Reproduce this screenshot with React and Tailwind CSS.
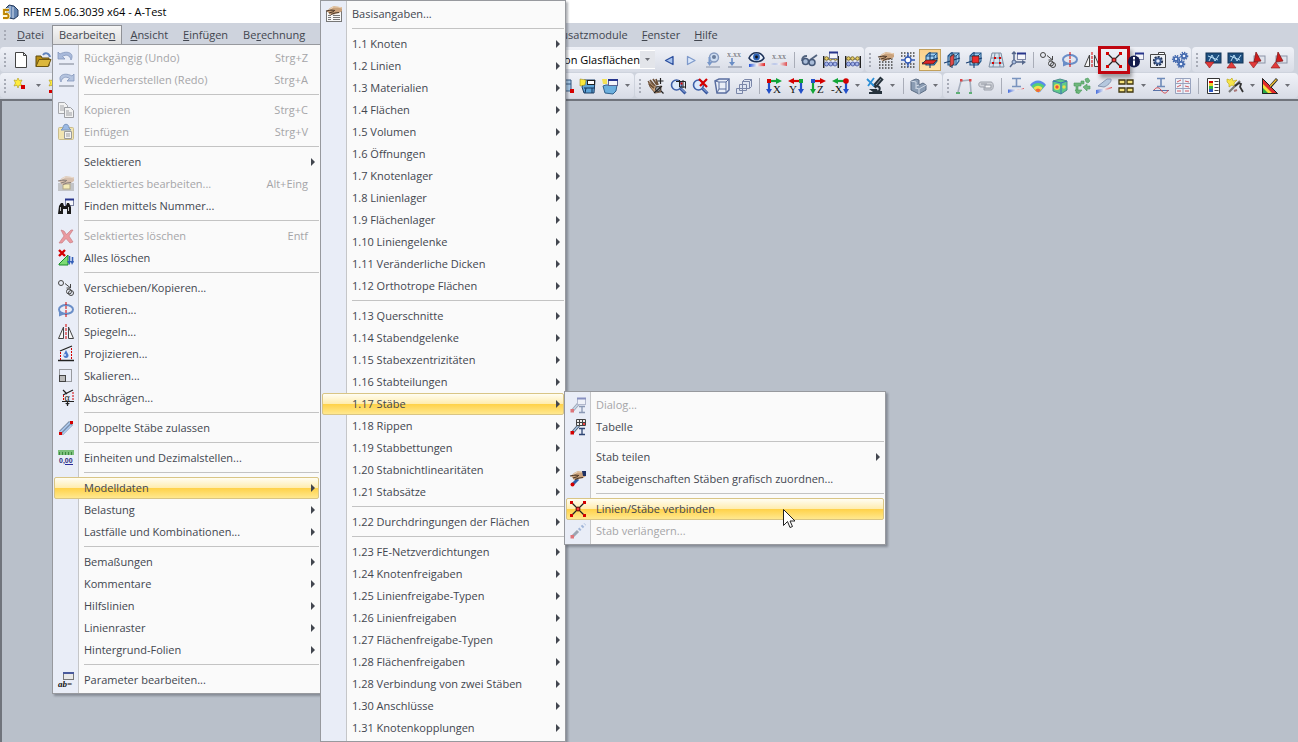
import React from 'react';

const RED = '#d40000';
const BLUE = '#2c4f9e';

const gradientStops = (
    <defs>
        <linearGradient id="heat" x1="0" y1="0" x2="1" y2="0">
            <stop offset="0" stopColor="#1f4fd8" />
            <stop offset="0.5" stopColor="#f4f4f8" />
            <stop offset="1" stopColor="#e02020" />
        </linearGradient>
        <linearGradient id="rainbow" x1="0" y1="0" x2="1" y2="1">
            <stop offset="0" stopColor="#3b6be0" />
            <stop offset="0.35" stopColor="#3fc56a" />
            <stop offset="0.65" stopColor="#f0e04a" />
            <stop offset="1" stopColor="#e8443a" />
        </linearGradient>
    </defs>
);

const dialog = (
    <>
        <rect x="7.5" y="1.5" width="8" height="6" fill="#f4f5fa" stroke="#7d84a4" />
        <path d="M7 1.500h9" stroke="#27358c" strokeWidth="2" />
    </>
);

const member = (
    <>
        <path d="M3 13L9 6" stroke="#51606f" strokeWidth="3" />
        <path d="M3 13L9 6" stroke="#a9c6e6" strokeWidth="1.2" />
        <rect x="0.5" y="12" width="3.5" height="3.5" fill={RED} />
        <path d="M9 9.5h6M9 15.5h6M12 10v6" stroke="#2d4574" strokeWidth="1.3" />
    </>
);

const hand = (
    <>
        <path d="M1 5l3-3 4-2 5 1h3v4l-3 2-3 .5-2 1-2-.5-2 1-1-1.500z" fill="#caa27c" />
        <path d="M3 4l4-3h5l4 1" fill="none" stroke="#ecd3b8" strokeWidth="1.2" />
        <path d="M0 5l5-1 4 .5M3 7l5-1.500M5 8.500l4-1.500 4-.5" fill="none" stroke="#4d3828" strokeWidth="1.1" />
    </>
);

const abacus = (
    <>
        <path d="M.7 4v12M15.3 4v12" stroke="#222" strokeWidth="1.4" />
        <path d="M1 7h14M1 12h14" stroke="#555" />
        <g fill="#e8cf6a" stroke="#6b5a18" strokeWidth="0.8">
            <circle cx="3.500" cy="6.500" r="1.800" />
            <circle cx="7.500" cy="6.500" r="1.800" />
            <circle cx="12.500" cy="6.500" r="1.800" />
        </g>
        <g fill="#a3b4ea" stroke="#3a4a98" strokeWidth="0.8">
            <circle cx="3.500" cy="12" r="2" />
            <circle cx="7.800" cy="12" r="2" />
            <circle cx="12" cy="12" r="2" />
        </g>
    </>
);

const lens = (
    <>
        <circle cx="6.5" cy="7" r="5" fill="#dbe9fb" stroke="#3d5fa8" strokeWidth="1.6" />
        <path d="M10.500 10.500l5 5" stroke="#34549c" strokeWidth="3" />
        <path d="M11 10.500l4 4" stroke="#9fb9ea" />
    </>
);

const planeBase = (
    <>
        <path d="M4 4l3-3h8v8l-3 4H4z" fill="#9fcdf0" stroke="#1f5488" strokeWidth="1.1" />
        <path d="M4 4h8v9M12 4l3-3" stroke="#1f5488" fill="none" />
        <path d="M8 0v16M0 11l16-5" stroke="#173d70" strokeWidth="1.1" />
    </>
);

const star = (
    <path d="M5 0l1.200 2.500L9 2 7.500 5 9 8 6 7.200 5 10 4 7.200 1 8l1.500-3L1 2l2.800.5z" fill="#ffec3d" stroke="#b09c10" strokeWidth="0.6" />
);

const screen = (
    <>
        <rect x="1" y="1" width="15" height="10" fill="#1d4f80" stroke="#123456" />
        <path d="M4 9l3-6 3 6 4-6M3 4l10 4" stroke="#b9ddf5" fill="none" />
    </>
);

const pagePlot = (
    <>
        <rect x="5" y="4" width="11" height="7" fill="#dfe3ec" stroke="#8b94a7" />
        <path d="M5 10l2-10 5 9z" fill="#cf1b1b" stroke="#7a1111" strokeWidth="0.7" />
    </>
);

const ICONS = {
    app: (
        <>
            <path d="M3 5l4-4 5 1 4 4v6l-4 3-5-1z" fill="#6484b0" stroke="#273d5f" />
            <path d="M8 2v11M11 3v11" stroke="#d5e0f0" />
            <path d="M7 6H2v4h3c2 0 2 4 0 4H1" stroke="#fff5c8" strokeWidth="3.4" fill="none" />
            <path d="M7 6H2v4h3c2 0 2 4 0 4H1" stroke="#bd8500" strokeWidth="1.8" fill="none" />
        </>
    ),
    newFile: <path d="M2.500.5h8l3 3v12h-11zM10.500.5v3h3" fill="#fff" stroke="#444" />,
    open: (
        <>
            <path d="M1 14.500V4h5l1 2h7v8z" fill="#b98e12" stroke="#5e4a10" />
            <path d="M1 14.500l3-7h12l-3 7z" fill="#dcb73c" stroke="#6d5510" />
            <path d="M8 3c2-3 6-2 7 2" fill="none" stroke="#5f83bd" strokeWidth="2" />
        </>
    ),
    undo: (
        <>
            <path d="M0 2v7h7L4.500 6.500C8 4 12 5 13 10c4-7-4-10-11-6z" fill="#a9badb" stroke="#8497bb" strokeWidth="0.8" />
            <path d="M1 14h15" stroke="#a2a8b5" strokeWidth="1.6" />
        </>
    ),
    redo: (
        <>
            <path d="M16 2v7H9l2.500-2.500C8 4 4 5 3 10c-4-7 4-10 11-6z" fill="#b5c4df" stroke="#8497bb" strokeWidth="0.8" />
            <path d="M1 14h15" stroke="#a2a8b5" strokeWidth="1.6" />
        </>
    ),
    copy: (
        <>
            <path d="M.5.5h6l3 3v8h-9zM2 4h4M2 6h5M2 8h5" fill="#f2f2f2" stroke="#a4a6ab" />
            <path d="M6.500 5.500h6l3 3v7h-9zM8 9h3M8 11h6M8 13h6" fill="#f2f2f2" stroke="#9b9da2" />
        </>
    ),
    paste: (
        <>
            <rect x="0.500" y="3.500" width="15" height="12" rx="1" fill="#f1e4b0" stroke="#c9bc8d" />
            <path d="M5 4c0-5 6-5 6 0l2 2H3z" fill="#9bb9e4" stroke="#7a96bf" />
            <path d="M6.500 7.500h7v7h-7zM8 10h4M8 12h4" fill="#f3f3f3" stroke="#9b9b9b" />
        </>
    ),
    editSel: (
        <g opacity="0.6">
            <rect x="0" y="7" width="16" height="8" fill="#a9a9a9" />
            <rect x="5" y="8" width="7" height="5" fill="#fbe98e" stroke="#8d7a3a" />
            {hand}
        </g>
    ),
    find: (
        <>
            {dialog}
            <path d="M0 16l1-8 2-3h2l1 3h2l1-3h2l2 4v7H9v-5H5v5z" fill="#1a1a1a" />
            <path d="M2.500 13V9M10.500 13V9" stroke="#ccc" />
        </>
    ),
    deleteSel: <path d="M3 2l3 1 2.500 3.500L13 2h2l-4 6 4 6-3 1-4-4.500L4 15H1l5-7z" fill="#ea9aa0" stroke="#c4757c" strokeWidth="0.6" />,
    deleteAll: (
        <>
            <path d="M1 15V14l9-9v10z" fill="#7ddc74" stroke="#1a8b2b" />
            <path d="M1 0l6 6M7 0L1 6" stroke={RED} strokeWidth="2.4" />
            <path d="M11.500 6v6M14.500 7v6" stroke="#3560b8" strokeWidth="1.6" />
            <path d="M9 11h4l-1.500 4zM12.500 11H16l-2 4z" fill="#3560b8" />
        </>
    ),
    move: (
        <g fill="none" stroke="#444">
            <circle cx="3" cy="3" r="2.500" />
            <path d="M7 3.500l5 4M12.500 4v4h-4" />
            <circle cx="11" cy="11.500" r="2.500" />
            <circle cx="13" cy="13" r="2.500" />
        </g>
    ),
    rotate: (
        <>
            <ellipse cx="8" cy="7.500" rx="7" ry="4.500" fill="none" stroke="#6a8ec8" strokeWidth="2" />
            <path d="M1 8.500v6l6-2.500z" fill="#6a8ec8" />
            <path d="M8 0v16" stroke={RED} strokeDasharray="3 1" />
        </>
    ),
    mirror: (
        <>
            <path d="M5.500 3v11.500h-5zM10.500 3v11.500h5z" fill="#f5f5f5" stroke="#444" />
            <path d="M8 0v16" stroke={RED} strokeDasharray="3 1" />
        </>
    ),
    project: (
        <>
            <path d="M2 5l12-5" stroke="#222" strokeWidth="1.300" />
            <path d="M0 14.500h16" stroke="#222" strokeWidth="1.500" />
            <path d="M2.500 6v8M13.500 2v12" stroke={RED} strokeDasharray="2 1" />
            <path d="M8 4l2.500 5c.5 4-5.500 4-5 0z" fill="#4b79cb" />
            <circle cx="7" cy="9" r="1" fill="#dce9ff" />
        </>
    ),
    scale: (
        <>
            <rect x="1.500" y="1.500" width="12" height="12" fill="none" stroke="#444" strokeDasharray="1 1" />
            <rect x="1.500" y="7.500" width="6" height="6" fill="#bbb" stroke="#444" />
        </>
    ),
    skew: (
        <>
            <path d="M5 5l10-5M4 11.500h12M5 0l4 4M9.500 12v4" stroke="#222" strokeWidth="1.200" fill="none" />
            <path d="M5.500 5v6M15 2v9" stroke={RED} strokeDasharray="2 1" />
            <text x="6.500" y="10.500" fontSize="10" fill="#222" fontFamily="Liberation Serif">α</text>
            <path d="M7 13h5l-2.500 2z" fill="#222" />
        </>
    ),
    doubled: (
        <>
            <path d="M3 13L13 3" stroke="#6b7c93" strokeWidth="5.500" />
            <path d="M2 12.500L12 2.500M4.500 14l9-9" stroke="#a8c4e8" strokeWidth="1.800" />
            <rect x="1" y="12" width="3" height="3" fill={RED} />
            <rect x="12" y="1" width="3" height="3" fill={RED} />
        </>
    ),
    units: (
        <>
            <rect x="0" y="0" width="16" height="5" fill="#7dc07c" />
            <path d="M1.500 2v3M4.500 2v3M7.500 2v3M10.500 2v3M13.500 2v3" stroke="#3d8a41" />
            <text x="1" y="13" fontSize="7" fontWeight="bold" fill="#2a2a7c" fontFamily="Liberation Sans">0,00</text>
            <path d="M7 14.500h8" stroke="#2a2a9c" />
        </>
    ),
    param: (
        <>
            <rect x="5.500" y="0.500" width="10" height="7" fill="#e8e8e8" stroke="#777" />
            <path d="M5 1h11" stroke="#4a5a9c" strokeWidth="2" />
            <text x="0" y="15" fontSize="9" fontStyle="italic" fontWeight="bold" fill="#111" fontFamily="Liberation Serif">ab=</text>
        </>
    ),
    base: (
        <>
            <rect x="0.500" y="5.500" width="15" height="10" fill="#f7f7f7" stroke="#777" />
            <path d="M2 9.500h3M7 9.500h7M2 11.500h3M7 11.500h7M2 13.500h3M7 13.500h7" stroke="#777" />
            {hand}
        </>
    ),
    memberDialog: <g opacity="0.5">{member}{dialog}</g>,
    memberTable: (
        <>
            {member}
            <path d="M6.500.5h9v6h-9zM9.500.5v6M12.500.5v6M6.500 3.500h9" fill="#eee" stroke="#444" />
            <rect x="13" y="4" width="2" height="2" fill="#e44" />
        </>
    ),
    memberAssign: (
        <>
            <path d="M2 14l6-6" stroke="#2f5fa8" strokeWidth="3" />
            <circle cx="2.500" cy="13.500" r="2" fill={RED} />
            {hand}
            <path d="M12 0h4v5h-3z" fill="#1c2f63" />
        </>
    ),
    connect: (
        <>
            <path d="M1.500 1.500l13 13M14.500 1.500l-13 13" stroke="#222" strokeWidth="1.300" />
            <path d="M0 0h3v3H0zM13 0h3v3h-3zM0 13h3v3H0zM13 13h3v3h-3z" fill={RED} />
            <circle cx="8" cy="8" r="2" fill="#f03a3a" stroke="#5c0a0a" />
        </>
    ),
    extend: (
        <g opacity="0.5">
            <path d="M2 14l6-6" stroke="#51606f" strokeWidth="3" />
            <path d="M9 7l6-6" stroke="#5a80bd" strokeWidth="3" strokeDasharray="2 2" />
            <rect x="0.500" y="12" width="3.500" height="3.500" fill={RED} />
        </g>
    ),
    prev: <path d="M12 4.500v8L4.500 8.500z" fill="#a9c4ee" stroke={BLUE} strokeWidth="1.300" strokeLinejoin="round" />,
    next: <path d="M4.500 4.500v8l7.500-4z" fill="#dbe8fb" stroke="#7f9acb" strokeWidth="1.300" strokeLinejoin="round" />,
    eyeLoad: (
        <g opacity="0.65">
            <circle cx="9" cy="5.500" r="4.500" fill="#c2d7f2" stroke="#5270a5" strokeWidth="1.400" />
            <circle cx="9" cy="5" r="2" fill="#29446e" />
            <path d="M4.500 5v6" stroke="#4270b8" strokeWidth="2" />
            <path d="M2 10h5.500L4.500 14z" fill="#4270b8" />
            <path d="M1 15h14" stroke="#8e96a8" strokeWidth="1.600" />
        </g>
    ),
    valueLoad: (
        <g opacity="0.75">
            <text x="0" y="5" fontSize="8" fill="#333" fontFamily="Liberation Serif">x.xx</text>
            <path d="M5 6v6" stroke="#4270b8" strokeWidth="1.600" />
            <path d="M2 10h6l-3 4z" fill="#4270b8" />
            <path d="M1 15h14" stroke="#8e96a8" strokeWidth="1.600" />
        </g>
    ),
    eyeResult: (
        <>
            <path d="M0 6c3-7 12-7 15 0-3 5-12 5-15 0z" fill="#e9f1fd" stroke="#1c3157" strokeWidth="1.500" />
            <circle cx="7.500" cy="5" r="3.400" fill="#2d61b3" />
            <circle cx="7.500" cy="5" r="1.400" fill="#111" />
            <path d="M0 15v-3l16-1v3z" fill="url(#heat)" />
        </>
    ),
    valueResult: (
        <g opacity="0.75">
            <text x="1" y="7" fontSize="8" fill="#333" fontFamily="Liberation Serif">x.xx</text>
            <path d="M0 12l16-2v4z" fill="url(#heat)" />
        </g>
    ),
    glasses: (
        <>
            <path d="M1 9c0-4 2-5 5-5M9 8l7-5" stroke="#53647f" strokeWidth="1.800" fill="none" />
            <circle cx="4.500" cy="9.500" r="3" fill="#a9bcd8" stroke="#455878" strokeWidth="1.500" />
            <circle cx="11" cy="10.500" r="3" fill="#a9bcd8" stroke="#455878" strokeWidth="1.500" />
        </>
    ),
    abacusDialog: <>{abacus}<g transform="translate(-1 -1)">{dialog}</g></>,
    abacus,
    gridHand: (
        <>
            <path d="M1 7h15M1 10h15M1 13h15M1 16h15" stroke="#444" strokeWidth="1.300" strokeDasharray="1.500 1.500" />
            {hand}
        </>
    ),
    gridSnap: (
        <>
            <path d="M1 1h15M1 4h15M1 12h15M1 15h15" stroke="#444" strokeWidth="1.300" strokeDasharray="1.500 1.500" />
            <path d="M8 1v14M1 8h14" stroke="#2f57b5" strokeWidth="1.300" />
            <circle cx="8" cy="8" r="3" fill="#fff" stroke="#2f57b5" strokeWidth="1.300" />
        </>
    ),
    planeXY: <>{planeBase}<path d="M0 12l4-4h11l-4 4z" fill="#d92525" stroke="#222" strokeWidth="0.700" /></>,
    planeYZ: <>{planeBase}<path d="M6 5l4-3v10l-4 3z" fill="#e04a4a" stroke="#222" strokeWidth="0.700" /></>,
    planeXZ: <>{planeBase}<path d="M6 4h7v7H6z" fill="#ee2b2b" stroke="#222" strokeWidth="0.700" /></>,
    mesh: (
        <>
            <path d="M4 1h9l3 14H1zM3 6h11M2 11h13M7 1L5 15M11 1l1 14" fill="#d7e4f0" stroke="#7d8da1" />
            <path d="M6 5h2v2H6zM11 5h2v2h-2zM4 10h2v2H4zM11 10h2v2h-2z" fill={RED} />
        </>
    ),
    csDialog: (
        <>
            <path d="M4 1v9h8M4 10l-4 5M2 2l2-2 2 2" stroke="#56688c" strokeWidth="1.500" fill="none" />
            {dialog}
            <circle cx="4" cy="10" r="2" fill="#a8bddf" stroke="#56688c" />
            <path d="M12 8l4 2-4 3z" fill="#56688c" />
        </>
    ),
    info: (
        <>
            {dialog}
            <circle cx="6" cy="9.500" r="6" fill="#141c4c" />
            <path d="M6 5v2.500M6 8.500v5" stroke="#fff" strokeWidth="2" />
        </>
    ),
    gearWindow: (
        <>
            <path d="M.5 2.500h15v13H.5z" fill="#eef0f4" stroke="#444" />
            <path d="M8.500.5h6v2h-6z" fill="#fff" stroke="#444" />
            <circle cx="8" cy="9" r="4" fill="#cddaf0" stroke="#24324f" strokeWidth="2.200" strokeDasharray="2 1" />
            <circle cx="8" cy="9" r="2.600" fill="#e7eefb" stroke="#3d5b93" strokeWidth="1.600" />
        </>
    ),
    gears: (
        <>
            <g fill="none" stroke="#3f66ad" strokeWidth="1.600" strokeDasharray="1.300 1">
                <circle cx="4" cy="7" r="3.300" />
                <circle cx="12" cy="4" r="3.500" />
                <circle cx="9" cy="12" r="3.500" />
            </g>
            <g fill="#eaf1ff" stroke="#3f66ad" strokeWidth="1.700">
                <circle cx="4" cy="7" r="2" />
                <circle cx="12" cy="4" r="2.200" />
                <circle cx="9" cy="12" r="2.200" />
            </g>
        </>
    ),
    screenDown: <>{screen}<path d="M0 10h9l-4.500 6z" fill="#e23b3b" stroke="#8b1919" strokeWidth="0.600" /></>,
    screenUp: <>{screen}<path d="M0 16h9l-4.500-6z" fill="#e23b3b" stroke="#8b1919" strokeWidth="0.600" /></>,
    plotDown: <>{pagePlot}<path d="M0 10h9l-4.500 6z" fill="#e23b3b" stroke="#8b1919" strokeWidth="0.600" /></>,
    plotUp: <>{pagePlot}<path d="M0 16h9l-4.500-6z" fill="#e23b3b" stroke="#8b1919" strokeWidth="0.600" /></>,
    newNode: <>{star}<rect x="8" y="7" width="4" height="4" fill={RED} /></>,
    newLine: (
        <>
            <path d="M2 14L13 7" stroke="#222" />
            {star}
            <rect x="1" y="12" width="3" height="3" fill={RED} />
        </>
    ),
    tableBlue: (
        <>
            <path d="M2 2h11v11H2zM2 6h11M7 2v11" fill="#a9cbe9" stroke="#31557f" />
            <rect x="12" y="11" width="4" height="4" fill={RED} />
        </>
    ),
    boxNew: (
        <>
            <path d="M2 9l2-7h11l-1 13H4z" fill="#5fa5d8" stroke="#1c3e66" />
            <path d="M4 10h11M6 10l-1 5M12 10v5" stroke="#12335a" />
            <rect x="7.500" y="2.500" width="7" height="4" fill="#fff" stroke="#222" />
            <path d="M0 1l6 1-1 5-5 1z" fill="#fbe83c" stroke="#8c7c12" strokeWidth="0.500" />
        </>
    ),
    boxDialog: (
        <>
            <path d="M1 8l3-1h11l-1 6-3 3-8-1z" fill="#6cb0de" stroke="#31618c" />
            <rect x="6.500" y="1.500" width="9" height="6" fill="#f4f5fa" stroke="#5a6390" />
            <path d="M6 2h10" stroke="#27358c" strokeWidth="2" />
            <path d="M0 1h5v5H1z" fill="#f4e256" />
        </>
    ),
    pan: (
        <>
            <path d="M0 3l4 3 5 3 4-1v6l-6 1-5-6z" fill="#caa27c" stroke="#5f4530" strokeWidth="0.800" />
            <path d="M2 2l5 6M5 1l4 6M8 1l2 6M1 6l5 4" stroke="#6b4f38" strokeWidth="1.700" />
            <circle cx="10" cy="11" r="2.500" fill="#9a9ea6" stroke="#333" />
            <path d="M12.500 0v6M9.500 3h6M6 15l8-7M13 13l2.500 2.500" stroke="#222" strokeWidth="1.200" />
        </>
    ),
    zoomWin: <>{lens}<path d="M6 3.500h9.500v7M9.500 2v7h6M13 2v8" stroke="#222" fill="none" /><rect x="10.500" y="4.500" width="2" height="2" fill={RED} /></>,
    zoomOff: <>{lens}<path d="M7 1l8 8M15 1L8 8" stroke={RED} strokeWidth="2.200" /></>,
    cube: (
        <>
            <path d="M1 3l4-2h10v11l-3 3H3z" fill="#e9eef7" stroke="#5a6ea0" strokeWidth="1.500" />
            <path d="M5 4h7v7H5zM1 3l4 1M12 4l3-3M5 11l-2 4M12 11v4" fill="none" stroke="#5a6ea0" />
        </>
    ),
    cubes: <path d="M6.500 3.500l2-2h7v7l-2 2h-7zM3.500 6.500h7v6h-7zM.5 10.500h6v5h-6zM6.500 3.500h7v7M13.500 3.500l2-2" fill="#dfe5f1" stroke="#7a86a8" />,
    axisX: (
        <>
            <path d="M3 3h9" stroke="#13a538" strokeWidth="2.200" />
            <path d="M10 0l6 3-6 3z" fill="#13a538" />
            <path d="M3 4v8" stroke="#2350c8" strokeWidth="2.200" />
            <path d="M0 11h6l-3 5z" fill="#2350c8" />
            <rect x="1" y="1" width="4" height="4" fill={RED} />
            <text x="7" y="15" fontSize="11" fill="#111" fontFamily="Liberation Serif">X</text>
        </>
    ),
    axisY: (
        <>
            <path d="M4 3h9" stroke={RED} strokeWidth="2.200" />
            <path d="M6 0L0 3l6 3z" fill={RED} />
            <path d="M13 4v8" stroke="#2350c8" strokeWidth="2.200" />
            <path d="M10 11h6l-3 5z" fill="#2350c8" />
            <rect x="11" y="1" width="4" height="4" fill="#13a538" />
            <text x="1" y="15" fontSize="11" fill="#111" fontFamily="Liberation Serif">Y</text>
        </>
    ),
    axisZ: (
        <>
            <path d="M3 3h9" stroke={RED} strokeWidth="2.200" />
            <path d="M10 0l6 3-6 3z" fill={RED} />
            <path d="M3 4v8" stroke="#13a538" strokeWidth="2.200" />
            <path d="M0 11h6l-3 5z" fill="#13a538" />
            <rect x="1" y="1" width="4" height="4" fill="#2350c8" />
            <text x="7" y="15" fontSize="11" fill="#111" fontFamily="Liberation Serif">Z</text>
        </>
    ),
    axisMX: (
        <>
            <path d="M4 3h9" stroke="#13a538" strokeWidth="2.200" />
            <path d="M6 0L0 3l6 3z" fill="#13a538" />
            <path d="M14 4v8" stroke="#2350c8" strokeWidth="2.200" />
            <path d="M11 11h6l-3 5z" fill="#2350c8" />
            <circle cx="14" cy="3" r="2.800" fill={RED} />
            <text x="-1" y="15" fontSize="11" fill="#111" fontFamily="Liberation Serif">-X</text>
        </>
    ),
    scope: (
        <>
            <path d="M15 0L7 9" stroke="#26323c" strokeWidth="4.500" />
            <path d="M14 1L9 7" stroke="#8c98a4" strokeWidth="1" />
            <path d="M10 8c4 1 3 4 1 6" stroke="#26323c" strokeWidth="2" fill="none" />
            <path d="M2 11h8l1 2h4v3H2v-2h4z" fill="#26323c" />
            <path d="M0 1l7 7M7 0L1 8" stroke="#2b8fd6" strokeWidth="1.800" />
        </>
    ),
    solid: (
        <>
            <path d="M1 3l5-2 3 1v5l4-2 3 2v5l-7 4-8-4z" fill="#8a9cb3" stroke="#5c6d84" />
            <path d="M1 3l5 1v7M9 7l-3 1M9 16v-5l7-4M9 11l-3-1" stroke="#d1dae6" fill="none" />
        </>
    ),
    frame: (
        <g opacity="0.7">
            <path d="M2 14L5 3l9-1 1 12" stroke="#8b97a8" strokeWidth="1.600" fill="none" />
            <path d="M4 1h2.500v2.500H4zM13 1h2.500v2.500H13z" fill={RED} />
            <path d="M0 15h4M13 15h3" stroke="#2a9b45" strokeWidth="2" />
        </g>
    ),
    roll: (
        <g opacity="0.75">
            <path d="M3 4h10c3 0 3 8 0 8H6V9H3C0 9 0 4 3 4z" fill="#c9ccd2" stroke="#858a94" />
            <path d="M3 6h6" stroke="#787e89" />
            <rect x="7" y="7" width="6" height="3" fill="#fff" stroke="#787e89" />
        </g>
    ),
    beamHeat: (
        <g opacity="0.8">
            <path d="M4 .5h9M4 8.500h9M8.500.5v8" stroke="#5f7fb3" strokeWidth="1.600" />
            <path d="M0 11.500L16 11v-1L0 15z" fill="url(#heat)" />
        </g>
    ),
    fan: (
        <>
            <path d="M0 7c4-6 12-6 16 0l-6 7c-2 1-3 0-4-1z" fill="#5a8bea" />
            <path d="M1.500 8c4-4 9-4 13 0l-5 6h-3z" fill="#53cf78" />
            <path d="M3.500 10c3-3 6-3 9 0l-3 4h-3z" fill="#f3e04d" />
            <path d="M5 12c2-2 4-2 6 0l-2 2H7z" fill="#ee6a3c" />
        </>
    ),
    heatCube: (
        <>
            <path d="M1 3l7-2 7 2v9l-6 4-8-3z" fill="#5fc98a" stroke="#4c8c8c" />
            <path d="M1 3l8 2 6-2M9 5v11" stroke="#3b6fbe" fill="none" />
            <circle cx="5" cy="9" r="3" fill="#f0e04a" />
            <circle cx="5" cy="9" r="1.700" fill="#f04c3c" />
            <circle cx="12" cy="9" r="1.700" fill="#e8e04a" />
        </>
    ),
    support: (
        <g fill="#6eb67c" stroke="#4c9a5c" strokeWidth="0.600">
            <path d="M4 5h3V3h3v3H7v2h-3v7H2V8H0V5z" />
            <path d="M9 9l4-3v2h3v3h-3v2zM11 1l3-1 2 3-2 2-2-1z" />
            <path d="M1 12h7l-3.500 4z" />
        </g>
    ),
    knife: (
        <>
            <path d="M2 8l9-7h4c1 3-4 7-7 8z" fill="#b6c8de" stroke="#8797b0" />
            <path d="M0 12l16-3v1L0 16z" fill="url(#heat)" opacity="0.8" />
        </>
    ),
    blocks: <path d="M1 2h6v4H1zM9 2h6v4H9zM1 10h6v4H1zM9 10h6v4H9z" fill="#f5e27c" stroke="#3f3610" strokeWidth="1.300" />,
    beamWave: (
        <>
            <path d="M4 .5h8M4 8.500h8M8 .5v8" stroke="#6f8bb9" strokeWidth="1.600" />
            <path d="M0 12.500h16" stroke="#5a73a8" />
            <path d="M1 12c2-3 5-3 7 0s5 5 7 0" stroke="#d2454d" fill="none" />
        </>
    ),
    resultTable: (
        <>
            <path d="M.5.5h15v15H.5zM.5 5.500h15M.5 10.500h15M8 .5v15" fill="#eef1f8" stroke="#98a3be" />
            <path d="M2 4l4-2M2 9l4-2M10 3l4 1M10 8l4 1M2 13h4M10 13h4" stroke="#d05a62" />
        </>
    ),
    report: (
        <>
            <path d="M2.500.5h12v15h-12z" fill="#fff" stroke="#333" />
            <path d="M4 3h4v2H4z" fill={RED} />
            <path d="M4 5h4v3H4z" fill="#f0cf2c" />
            <path d="M4 8h4v3H4z" fill="#2fae47" />
            <path d="M4 11h4v3H4z" fill="#2c56c2" />
            <path d="M9.500 3.500h4M9.500 6.500h4M9.500 9.500h4M9.500 12.500h4" stroke="#444" />
        </>
    ),
    wand: (
        <>
            <path d="M0 1l3 1 2-2 1 3 4-1-3 3 1 4-3-2-3 2V6L0 4z" fill="#f6e44a" stroke="#b5a110" strokeWidth="0.600" />
            <path d="M13 3L2 14" stroke="#777" strokeWidth="2.200" />
            <path d="M8 8l4-3 2 1-1 3 3 5" stroke="#333" strokeWidth="1.800" fill="none" />
            <path d="M7 13l3-1" stroke="#a77" strokeWidth="2" />
        </>
    ),
    palette: (
        <>
            <path d="M0 0v16h16z" fill="#e22b2b" />
            <path d="M0 5l11 11H6L0 10z" fill="#f4e13a" />
            <path d="M0 9l7 7H0z" fill="#28a745" />
            <path d="M.5.5v15h15z" fill="none" stroke="#222" />
            <path d="M15 1L8 9" stroke="#222" strokeWidth="2.800" />
            <path d="M14.500 1.500L8 8.500" stroke="#f1c232" strokeWidth="1.400" />
        </>
    ),
};

const Icon = ({ name }) => (
    <svg width="16" height="16" viewBox="0 0 16 16" className="shrink-0 overflow-visible" aria-hidden="true">
        {ICONS[name]}
    </svg>
);

const FILE_TOOLS = ['newFile', 'open'];
const RESULT_TOOLS = ['prev', 'next', 'eyeLoad', 'valueLoad', 'eyeResult', 'valueResult', '|', 'glasses', 'abacusDialog', 'abacus'];
const GRID_TOOLS = ['gridHand', 'gridSnap', 'planeXY', 'planeYZ', 'planeXZ', 'mesh', 'csDialog', '|', 'move', 'rotate', 'mirror', 'connect', 'info', 'gearWindow', 'gears'];
const EXPORT_TOOLS = ['screenDown', 'screenUp', 'plotDown', 'plotUp'];
const INSERT_TOOLS = ['newNode', 'v', 'newLine'];
const TABLE_TOOLS = ['tableBlue', 'boxNew', 'boxDialog', 'v'];
const VIEW_TOOLS = ['pan', 'zoomWin', 'zoomOff', 'cube', 'cubes', '|', 'axisX', 'axisY', 'axisZ', 'axisMX', 'v', 'scope', 'v', '|', 'solid', 'v'];
const DISPLAY_TOOLS = ['frame', 'roll', '|', 'beamHeat', 'fan', 'heatCube', 'support', 'knife', 'blocks', 'v', 'beamWave', 'resultTable', '|', 'report', 'wand', 'v', 'palette', 'v'];

const ToolItem = ({ name }) => {
    if (name === '|') {
        return (
            <span className="flex w-2 shrink-0 justify-center">
                <span className="h-4 w-px bg-[#a9adb8]" />
            </span>
        );
    }
    if (name === 'v') {
        return (
            <button aria-label="Mehr" className="flex h-[22px] w-[13px] shrink-0 items-center justify-center">
                <svg width="5" height="3" viewBox="0 0 5 3"><path d="M0 0h5L2.500 3z" fill="#6d6f76" /></svg>
            </button>
        );
    }
    const active = name === 'planeXY';
    return (
        <button
            aria-label={name}
            className={`relative flex h-[22px] w-[22px] shrink-0 items-center justify-center ${active ? 'border border-[#c2a05c] bg-gradient-to-b from-[#fbd08c] to-[#fde3a8]' : ''}`}
        >
            <Icon name={name} />
            {name === 'connect' && (
                <span className="absolute -inset-x-[5px] -inset-y-[3px] border-3 border-[#c00610] shadow-[2px_4px_4px_rgba(0,0,0,0.35)]" />
            )}
        </button>
    );
};

const Tools = ({ items }) => items.map((name, i) => <ToolItem key={i} name={name} />);

const Band = ({ children, grow }) => (
    <div className={`flex h-[25px] shrink-0 items-center rounded-sm bg-gradient-to-b from-[#f0f2f8] to-[#d8dce6] ${grow ? 'grow' : ''}`}>
        <span className="flex w-[10px] shrink-0 flex-col items-center gap-[2px]">
            <i className="size-[2px] bg-[#a7abb6]" />
            <i className="size-[2px] bg-[#a7abb6]" />
            <i className="size-[2px] bg-[#a7abb6]" />
            <i className="size-[2px] bg-[#a7abb6]" />
        </span>
        {children}
    </div>
);

const EDIT_MENU = [
    { label: 'Rückgängig (Undo)', icon: 'undo', keys: 'Strg+Z', off: true },
    { label: 'Wiederherstellen (Redo)', icon: 'redo', keys: 'Strg+A', off: true },
    null,
    { label: 'Kopieren', icon: 'copy', keys: 'Strg+C', off: true },
    { label: 'Einfügen', icon: 'paste', keys: 'Strg+V', off: true },
    null,
    { label: 'Selektieren', sub: true },
    { label: 'Selektiertes bearbeiten...', icon: 'editSel', keys: 'Alt+Eing', off: true },
    { label: 'Finden mittels Nummer...', icon: 'find' },
    null,
    { label: 'Selektiertes löschen', icon: 'deleteSel', keys: 'Entf', off: true },
    { label: 'Alles löschen', icon: 'deleteAll' },
    null,
    { label: 'Verschieben/Kopieren...', icon: 'move' },
    { label: 'Rotieren...', icon: 'rotate' },
    { label: 'Spiegeln...', icon: 'mirror' },
    { label: 'Projizieren...', icon: 'project' },
    { label: 'Skalieren...', icon: 'scale' },
    { label: 'Abschrägen...', icon: 'skew' },
    null,
    { label: 'Doppelte Stäbe zulassen', icon: 'doubled' },
    null,
    { label: 'Einheiten und Dezimalstellen...', icon: 'units' },
    null,
    { label: 'Modelldaten', sub: true, active: true },
    { label: 'Belastung', sub: true },
    { label: 'Lastfälle und Kombinationen...', sub: true },
    null,
    { label: 'Bemaßungen', sub: true },
    { label: 'Kommentare', sub: true },
    { label: 'Hilfslinien', sub: true },
    { label: 'Linienraster', sub: true },
    { label: 'Hintergrund-Folien', sub: true },
    null,
    { label: 'Parameter bearbeiten...', icon: 'param' },
];

const MODEL_MENU = [
    { label: 'Basisangaben...', icon: 'base' },
    null,
    { label: '1.1 Knoten', sub: true },
    { label: '1.2 Linien', sub: true },
    { label: '1.3 Materialien', sub: true },
    { label: '1.4 Flächen', sub: true },
    { label: '1.5 Volumen', sub: true },
    { label: '1.6 Öffnungen', sub: true },
    { label: '1.7 Knotenlager', sub: true },
    { label: '1.8 Linienlager', sub: true },
    { label: '1.9 Flächenlager', sub: true },
    { label: '1.10 Liniengelenke', sub: true },
    { label: '1.11 Veränderliche Dicken', sub: true },
    { label: '1.12 Orthotrope Flächen', sub: true },
    null,
    { label: '1.13 Querschnitte', sub: true },
    { label: '1.14 Stabendgelenke', sub: true },
    { label: '1.15 Stabexzentrizitäten', sub: true },
    { label: '1.16 Stabteilungen', sub: true },
    { label: '1.17 Stäbe', sub: true, active: true },
    { label: '1.18 Rippen', sub: true },
    { label: '1.19 Stabbettungen', sub: true },
    { label: '1.20 Stabnichtlinearitäten', sub: true },
    { label: '1.21 Stabsätze', sub: true },
    null,
    { label: '1.22 Durchdringungen der Flächen', sub: true },
    null,
    { label: '1.23 FE-Netzverdichtungen', sub: true },
    { label: '1.24 Knotenfreigaben', sub: true },
    { label: '1.25 Linienfreigabe-Typen', sub: true },
    { label: '1.26 Linienfreigaben', sub: true },
    { label: '1.27 Flächenfreigabe-Typen', sub: true },
    { label: '1.28 Flächenfreigaben', sub: true },
    { label: '1.28 Verbindung von zwei Stäben', sub: true },
    { label: '1.30 Anschlüsse', sub: true },
    { label: '1.31 Knotenkopplungen', sub: true },
];

const MEMBER_MENU = [
    { label: 'Dialog...', icon: 'memberDialog', off: true },
    { label: 'Tabelle', icon: 'memberTable' },
    null,
    { label: 'Stab teilen', sub: true },
    { label: 'Stabeigenschaften Stäben grafisch zuordnen...', icon: 'memberAssign' },
    null,
    { label: 'Linien/Stäbe verbinden', icon: 'connect', active: true },
    { label: 'Stab verlängern...', icon: 'extend', off: true },
];

const MenuItem = ({ item }) => (
    <li role="none">
        <button
            role="menuitem"
            disabled={item.off}
            className={`flex h-[22px] w-full items-center rounded-[2px] border pr-[3px] text-left ${item.off ? 'text-[#a5a5a8]' : 'text-[#42464f]'} ${item.active ? 'border-[#d9c585] bg-[linear-gradient(to_bottom,#fffdf2,#ffedb0_48%,#ffd24a_52%,#ffe88f)]' : 'border-transparent'}`}
        >
            <span className="flex w-[22px] shrink-0 justify-center">{item.icon && <Icon name={item.icon} />}</span>
            <span className="grow pl-[7px] whitespace-nowrap">{item.label}</span>
            {item.keys && <span className="pr-[7px]">{item.keys}</span>}
            {item.sub && (
                <svg width="4" height="8" viewBox="0 0 4 8" className="shrink-0"><path d="M0 0l4 4-4 4z" fill="#42464f" /></svg>
            )}
        </button>
    </li>
);

const Menu = ({ items, label, className }) => (
    <ul
        role="menu"
        aria-label={label}
        className={`absolute border border-[#97999e] bg-[linear-gradient(to_right,#e9edf7_25px,#c5c6c8_25px,#c5c6c8_26px,#fafafa_26px)] px-px py-[2px] shadow-[2px_2px_2px_rgba(60,65,75,0.4)] ${className}`}
    >
        {items.map((item, i) => item
            ? <MenuItem key={i} item={item} />
            : <li key={i} role="separator" className="h-2 pt-[3px] pl-[30px]"><div className="h-px bg-[#c3c3c3]" /></li>
        )}
    </ul>
);

const MENUS = [
    ['', 'D', 'atei'],
    ['Bearbeite', 'n', ''],
    ['', 'A', 'nsicht'],
    ['', 'E', 'infügen'],
    ['Be', 'r', 'echnung'],
];

const MenuTitle = ({ parts, open }) => (
    <button className={`h-5 border px-[6px] ${open ? 'border-[#8f9196] border-b-transparent bg-gradient-to-b from-[#f6f6f6] to-[#dedede]' : 'border-transparent'}`}>
        {parts[0]}<u>{parts[1]}</u>{parts[2]}
    </button>
);

const App = () => {
    return (
        <div className="relative flex h-screen flex-col overflow-hidden bg-[#ced3dd] font-['Open_Sans','Noto_Sans',sans-serif] text-[11px] leading-4 text-[#42464f]">
            <svg width="0" height="0" className="absolute">{gradientStops}</svg>

            <header className="flex h-[23px] shrink-0 items-center gap-[5px] bg-white pl-[2px] text-black">
                <Icon name="app" />
                <h1>RFEM 5.06.3039 x64 - A-Test</h1>
            </header>

            <nav className="flex h-6 shrink-0 items-center">
                <span className="flex w-[10px] shrink-0 flex-col items-center gap-[2px]">
                    <i className="size-[2px] bg-[#a7abb6]" />
                    <i className="size-[2px] bg-[#a7abb6]" />
                    <i className="size-[2px] bg-[#a7abb6]" />
                </span>
                <div className="flex w-[538px] gap-px">
                    {MENUS.map((parts) => <MenuTitle key={parts.join('')} parts={parts} open={parts[1] === 'n'} />)}
                </div>
                <MenuTitle parts={['', 'Z', 'usatzmodule']} />
                <MenuTitle parts={['', 'F', 'enster']} />
                <MenuTitle parts={['', 'H', 'ilfe']} />
            </nav>

            <div className="flex flex-col gap-px">
                <div className="flex gap-px pr-1">
                    <Band>
                        <div className="flex w-[429px]"><Tools items={FILE_TOOLS} /></div>
                        <div className="mr-[3px] flex h-[19px] w-[216px] items-center bg-white">
                            <select aria-label="Ergebnis" className="grow appearance-none text-black [text-align-last:right]">
                                <option>Spannungen von Glasflächen</option>
                            </select>
                            <span className="flex h-[17px] w-[15px] items-center justify-center bg-[#e3e5ea]">
                                <svg width="5" height="3" viewBox="0 0 5 3"><path d="M0 0h5L2.500 3z" fill="#6d6f76" /></svg>
                            </span>
                        </div>
                        <Tools items={RESULT_TOOLS} />
                    </Band>
                    <Band><Tools items={GRID_TOOLS} /></Band>
                    <Band grow><Tools items={EXPORT_TOOLS} /></Band>
                </div>
                <div className="flex gap-px">
                    <Band>
                        <div className="flex w-[545px]"><Tools items={INSERT_TOOLS} /></div>
                        <Tools items={TABLE_TOOLS} />
                    </Band>
                    <Band><Tools items={VIEW_TOOLS} /></Band>
                    <Band grow><Tools items={DISPLAY_TOOLS} /></Band>
                </div>
            </div>

            <main className="mt-px grow border-t-2 border-l-2 border-[#70747c] bg-[#b9c0ca]" />

            <Menu items={EDIT_MENU} label="Bearbeiten" className="top-11 left-[52px] w-[269px]" />
            <Menu items={MODEL_MENU} label="Modelldaten" className="top-0 left-80 w-[246px]" />
            <Menu items={MEMBER_MENU} label="Stäbe" className="top-[391px] left-[564px] w-[322px]" />

            <svg width="12" height="19" viewBox="0 0 12 19" className="absolute top-[509px] left-[783px]">
                <path d="M.5.500v16l4-4 2.500 6 2.500-1-2.500-5.500h5z" fill="#fff" stroke="#222" />
            </svg>
        </div>
    );
};

export default App;
